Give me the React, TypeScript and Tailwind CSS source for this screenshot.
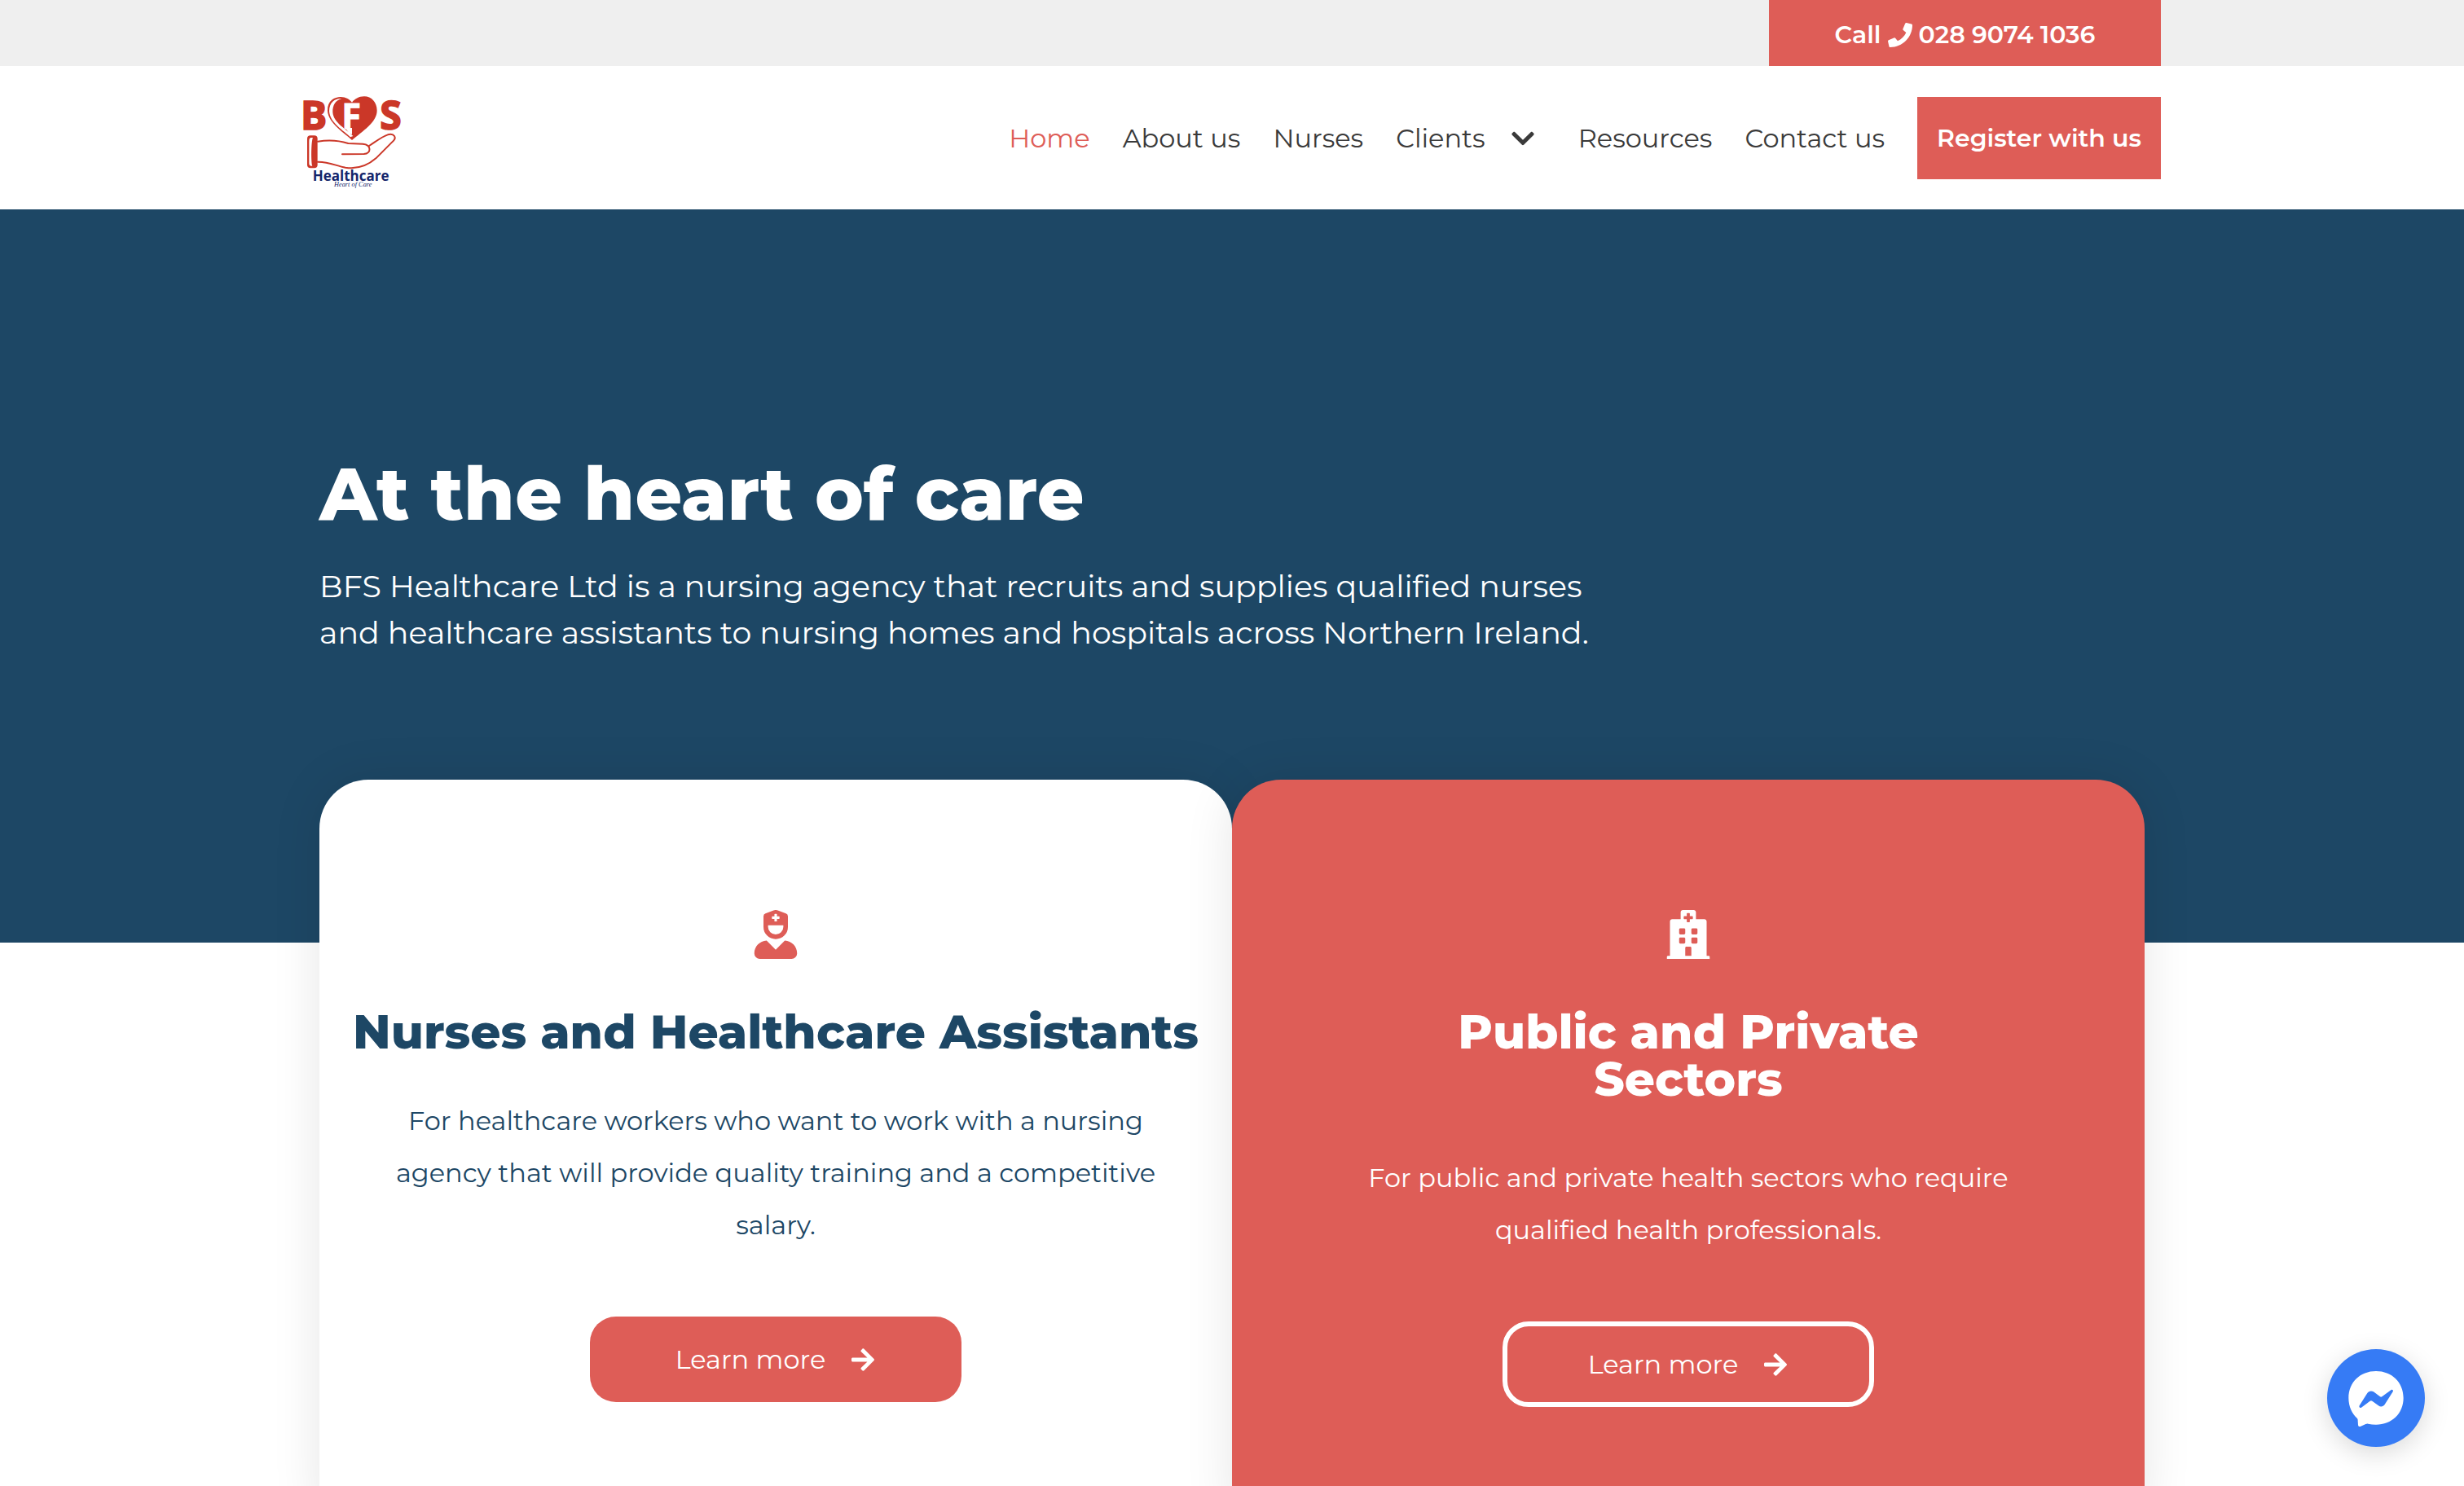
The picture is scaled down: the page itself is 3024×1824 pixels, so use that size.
import React from "react";
import { FaArrowRight, FaChevronDown, FaHospital, FaPhone, FaUserNurse } from "react-icons/fa";

function Logo() {
  return (
    <svg viewBox="66 80 360 345" className="h-[115px] w-[120px] overflow-visible" role="img" aria-label="BFS Healthcare, Heart of Care">
      <g fill="#cb3728" stroke="#cb3728" strokeWidth="5" fontFamily="'Open Sans', sans-serif" fontWeight="700">
        <text x="57" y="206" fontSize="144">B</text>
        <text x="349" y="206" fontSize="144">S</text>
      </g>
      <path
        d="M246 245 C222 220 158 184 156 136 C155 100 182 86 204 86 C224 86 238 96 246 106 C256 94 270 84 291 84 C318 84 338 106 338 136 C338 180 284 212 246 245Z"
        fill="#cb3728"
      />
      <path
        d="M240 234 C218 212 163 180 162 138 C162 104 186 90 208 92 C186 98 174 116 175 142 C178 182 226 204 250 230Z"
        fill="#fff"
      />
      <text x="208" y="204" fontSize="130" fontFamily="'Open Sans', sans-serif" fontWeight="700" fill="#fff" stroke="#fff" strokeWidth="3">F</text>
      <path d="M221 200 L246 200 L246 224 L236 220Z" fill="#fff" />
      <g fill="none" stroke="#cb3728" strokeWidth="6" strokeLinecap="round" strokeLinejoin="round">
        <path d="M120 250 C170 242 210 250 232 257 L286 259 C318 262 318 294 290 296 L210 297" />
        <path d="M309 266 C334 250 356 232 378 225 C402 219 412 236 396 250 L334 312 C300 342 262 352 222 346 C188 340 160 324 120 325" />
      </g>
      <rect x="81" y="228" width="38" height="120" rx="12" fill="#cb3728" />
      <path d="M102 236 L94 236 C89 238 88 242 88 250 L88 330 C88 338 91 341 100 340 C95 330 95 250 102 236Z" fill="#fff" />
      <text x="101" y="396" fontSize="51" fontFamily="'Open Sans', sans-serif" fontWeight="700" fill="#14256b">Healthcare</text>
      <text x="180" y="416" fontSize="25" fontFamily="'Liberation Serif', serif" fontStyle="italic" fill="#14256b">Heart of Care</text>
    </svg>
  );
}

function MessengerIcon() {
  return (
    <svg viewBox="0 0 360 360" className="size-full" aria-hidden="true">
      <path
        d="M180 81 C122 81 79 122 79 180 C79 211 92 238 110 254 C113 257 113 260 113 264 L114 279 C114 284 119 287 124 284 L142 276 C145 275 148 274 151 275 C160 277 170 278 180 278 C238 278 281 237 281 180 C281 122 238 81 180 81Z"
        fill="#fff"
      />
      <path
        d="M119 208 L148 162 C153 154 163 152 171 157 L195 175 C197 177 200 177 202 175 L235 151 C240 147 245 152 242 157 L212 204 C207 212 197 214 189 208 L166 191 C163 189 161 189 158 191 L126 215 C121 219 116 213 119 208Z"
        fill="#367bf5"
      />
    </svg>
  );
}

const navLink = "pt-0.5 hover:text-[#de5d57]";

export default function App() {
  return (
    <div className="relative h-screen overflow-hidden bg-white font-['Montserrat','Inter',sans-serif] text-[32px] text-[#3a3a3a]">
      <div className="bg-[#efefef]">
        <div className="mx-auto flex max-w-[2280px] justify-end">
          <a href="tel:02890741036" className="flex h-[81px] w-[481px] items-center justify-center gap-2 bg-[#de5d57] pt-1 text-[30px] font-semibold text-white">
            Call <FaPhone className="size-[30px]" aria-hidden="true" /> 028 9074 1036
          </a>
        </div>
      </div>

      <header className="mx-auto flex h-[176px] max-w-[2280px] items-center justify-between">
        <a href="#home" className="pt-[10px]"><Logo /></a>
        <nav className="flex items-center gap-10 whitespace-nowrap" aria-label="Main">
          <a href="#home" className="pt-0.5 text-[#de5d57]">Home</a>
          <a href="#about" className={navLink}>About us</a>
          <a href="#nurses" className={navLink}>Nurses</a>
          <button type="button" className="flex items-center gap-[30px] pt-0.5 pr-3 hover:text-[#de5d57]">
            Clients <FaChevronDown className="size-[32px]" aria-hidden="true" />
          </button>
          <a href="#resources" className={navLink}>Resources</a>
          <a href="#contact" className={navLink}>Contact us</a>
          <a href="#register" className="flex h-[101px] items-center bg-[#de5d57] px-6 text-[30px] font-semibold text-white">Register with us</a>
        </nav>
      </header>

      <main>
        <section className="h-[900px] bg-[#1d4765] text-white">
          <div className="mx-auto max-w-[2280px] px-5 pt-[294px]">
            <h1 className="text-[90px] leading-[110px] font-extrabold">At the heart of care</h1>
            <p className="mt-[30px] text-[38px] leading-[57px]">
              BFS Healthcare Ltd is a nursing agency that recruits and supplies qualified nurses
              <br />
              and healthcare assistants to nursing homes and hospitals across Northern Ireland.
            </p>
          </div>
        </section>

        <section className="relative mx-auto -mt-[200px] grid max-w-[2280px] grid-cols-2 px-5 text-center">
          <article className="flex flex-col items-center rounded-[60px] bg-white px-8 pt-[160px] pb-[160px] text-[#1d4765] shadow-[0_0_60px_rgba(0,0,0,0.1)]">
            <FaUserNurse className="size-[60px] text-[#de5d57]" aria-hidden="true" />
            <h2 className="mt-[61px] text-[58px] leading-[58px] font-extrabold whitespace-nowrap">Nurses and Healthcare Assistants</h2>
            <p className="mt-[48px] max-w-[960px] leading-[64px]">
              For healthcare workers who want to work with a nursing
              <br />
              agency that will provide quality training and a competitive
              <br />
              salary.
            </p>
            <a href="#nurses" className="mt-[80px] flex h-[105px] w-[456px] items-center justify-center gap-[30px] rounded-[32px] bg-[#de5d57] text-white">
              Learn more <FaArrowRight className="size-[32px]" aria-hidden="true" />
            </a>
          </article>
          <article className="flex flex-col items-center rounded-[60px] bg-[#de5d57] px-8 pt-[160px] pb-[160px] text-white shadow-[0_0_60px_rgba(0,0,0,0.1)]">
            <FaHospital className="size-[60px]" aria-hidden="true" />
            <h2 className="mt-[61px] text-[58px] leading-[58px] font-extrabold">
              Public and Private
              <br />
              Sectors
            </h2>
            <p className="mt-[60px] max-w-[960px] leading-[64px]">
              For public and private health sectors who require
              <br />
              qualified health professionals.
            </p>
            <a href="#clients" className="mt-[80px] flex h-[105px] w-[456px] items-center justify-center gap-[30px] rounded-[32px] border-6 border-white">
              Learn more <FaArrowRight className="size-[32px]" aria-hidden="true" />
            </a>
          </article>
        </section>
      </main>

      <button type="button" aria-label="Open Messenger chat" className="fixed right-12 bottom-12 size-[120px] rounded-full bg-[#367bf5] shadow-[0_8px_32px_rgba(0,0,0,0.15)]">
        <MessengerIcon />
      </button>
    </div>
  );
}
